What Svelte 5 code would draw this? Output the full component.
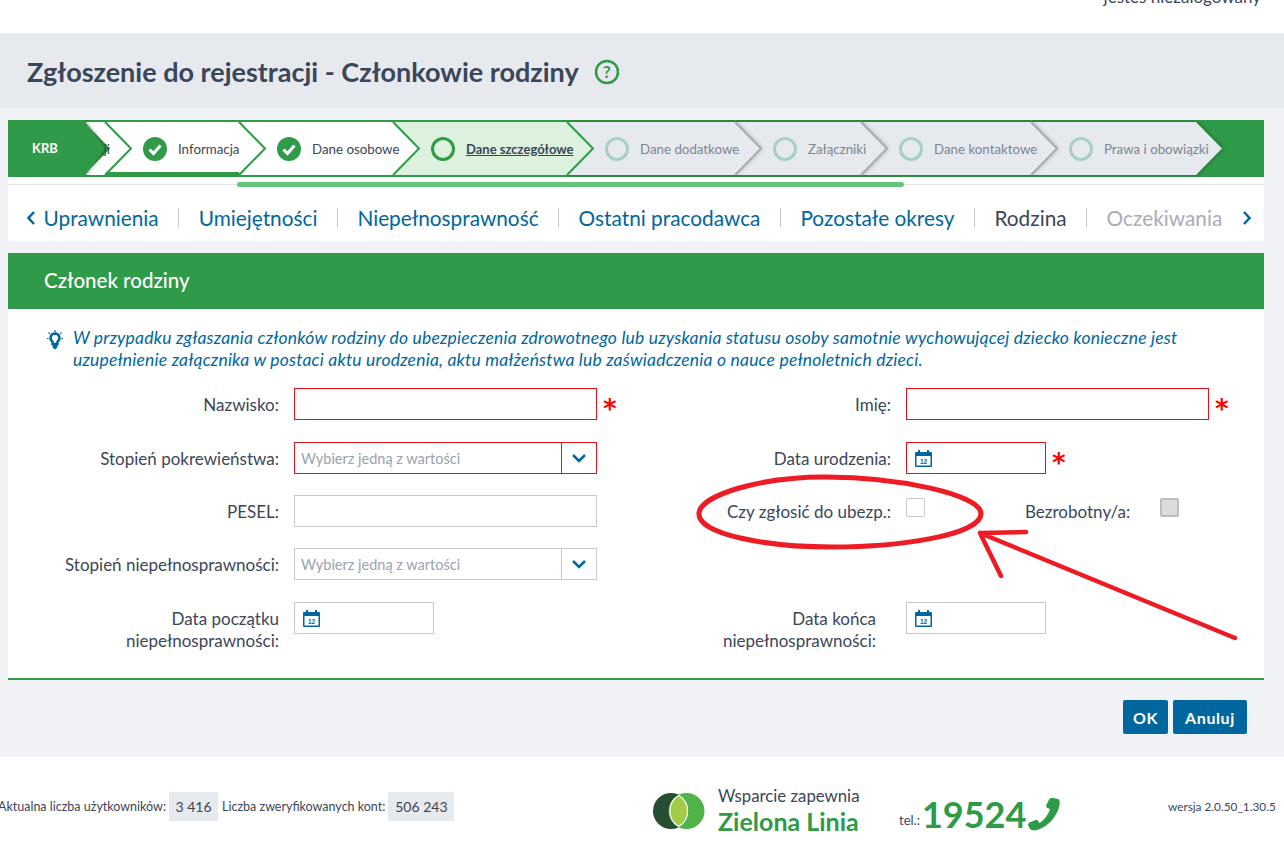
<script>
  const green = '#2f9a47';
  const steps = [
    { label: 'Informacja', state: 'done', width: 134 },
    { label: 'Dane osobowe', state: 'done', width: 154 },
    { label: 'Dane szczegółowe', state: 'current', width: 174 },
    { label: 'Dane dodatkowe', state: 'todo', width: 168 },
    { label: 'Załączniki', state: 'todo', width: 126 },
    { label: 'Dane kontaktowe', state: 'todo', width: 170 },
    { label: 'Prawa i obowiązki', state: 'todo', width: 165 }
  ];
  const slope = 26;
  const stepsLeft = 97;

  // chevrons are painted last to first, so each tip lies over the next notch
  let x = stepsLeft;
  const shapes = steps.map((s) => {
    const shape = { ...s, x, end: x + s.width };
    x += s.width;
    return shape;
  }).reverse();

  const chevron = (a, b) =>
    `${a},2 ${b},2 ${b + slope},28.5 ${b},55 ${a},55 ${a + slope},28.5`;
  const tip = (b) => `${b},2 ${b + slope},28.5 ${b},55`;

  const tabs = ['Uprawnienia', 'Umiejętności', 'Niepełnosprawność', 'Ostatni pracodawca', 'Pozostałe okresy'];
</script>

{#snippet calendar()}
  <svg class="cal" width="17" height="17" viewBox="0 0 17 17">
    <path fill="#00679e" d="M3 0h2v2h7V0h2v2h2a1 1 0 0 1 1 1v13a1 1 0 0 1-1 1H1a1 1 0 0 1-1-1V3a1 1 0 0 1 1-1h2z"/>
    <rect x="1.500" y="6" width="14" height="9.500" fill="#fff"/>
    <text x="8.500" y="13.500" text-anchor="middle" class="cal-num">12</text>
  </svg>
{/snippet}

{#snippet chevronDown()}
  <svg width="16" height="10" viewBox="0 0 16 10"><path d="M2 2l6 6 6-6" fill="none" stroke="#00679e" stroke-width="2.500"/></svg>
{/snippet}

<div class="page">
  <div class="topbar"><span>jesteś niezalogowany</span></div>

  <header class="head">
    <h1>Zgłoszenie do rejestracji - Członkowie rodziny</h1>
    <svg width="26" height="26" viewBox="0 0 26 26">
      <circle cx="13" cy="13" r="11" fill="none" stroke={green} stroke-width="2.500"/>
      <text x="13" y="19" text-anchor="middle" class="help">?</text>
    </svg>
  </header>

  <main class="main">
    <div class="wizard">
      <div class="stepper">
        <svg class="stepper-bg" width="1256" height="57" viewBox="0 0 1256 57">
          <rect width="1256" height="57" fill={green}/>
          {#each shapes as s, i}
            <polygon
              class:lifted={s.state === 'todo'}
              points={chevron(s.x, s.end)}
              fill={s.state === 'done' ? '#fff' : s.state === 'current' ? '#dcf2df' : '#e6e9ee'}
            />
            {#if i > 0}
              <polyline points={tip(s.end)} fill="none" stroke={s.state === 'todo' ? '#a9adb3' : green} stroke-width="2"/>
            {/if}
          {/each}
          <rect x="97" y="52" width="134" height="3" fill={green}/>
          <polygon points={chevron(76, 97)} fill="#fff"/>
          <polyline points={tip(97)} fill="none" stroke={green} stroke-width="2"/>
          <text x="102" y="33.500" text-anchor="end" class="cut">cji</text>
          <polygon class="lifted" points="0,0 76,0 97,28.500 76,57 0,57" fill={green}/>
        </svg>
        <div class="krb">KRB</div>
        {#each steps as s}
          <div class="step {s.state}" style="width: {s.width}px">
            {#if s.state === 'done'}
              <svg width="24" height="24" viewBox="0 0 24 24">
                <circle cx="12" cy="12" r="12" fill={green}/>
                <path d="M6.500 12.500l4 4 7-8" fill="none" stroke="#fff" stroke-width="3"/>
              </svg>
            {:else}
              <svg width="24" height="24" viewBox="0 0 24 24">
                <circle cx="12" cy="12" r="10.500" fill="none" stroke={s.state === 'current' ? green : '#a8cfc4'} stroke-width="3"/>
              </svg>
            {/if}
            <span>{s.label}</span>
          </div>
        {/each}
      </div>
      <div class="progress"><div class="bar"></div></div>
      <nav class="tabs">
        <svg class="arrow" width="10" height="16" viewBox="0 0 10 16"><path d="M8 2L2.500 8 8 14" fill="none" stroke="#00679e" stroke-width="2.500"/></svg>
        {#each tabs as t}
          <a href="#top">{t}</a>
          <i></i>
        {/each}
        <span class="now">Rodzina</span>
        <i></i>
        <span class="off">Oczekiwania</span>
        <svg class="arrow" width="10" height="16" viewBox="0 0 10 16"><path d="M2 2l5.500 6L2 14" fill="none" stroke="#00679e" stroke-width="2.500"/></svg>
      </nav>
    </div>

    <section class="card">
      <h2>Członek rodziny</h2>
      <div class="card-body">
        <div class="notice">
          <svg width="16" height="20" viewBox="0 0 16 20">
            <path d="M8 3.500a4.500 4.500 0 0 0-2.500 8.200V14h5v-2.300A4.500 4.500 0 0 0 8 3.500z" fill="none" stroke="#00679e" stroke-width="2.500"/>
            <path d="M5.500 15h5v2l-1.500 2H7l-1.500-2z" fill="#00679e"/>
            <path d="M8 0v2M1.500 2.500l1.300 1.300M14.500 2.500l-1.300 1.300M0 8.500h1.500M14.500 8.500H16" stroke="#00679e" stroke-width="1.200"/>
          </svg>
          <p>W przypadku zgłaszania członków rodziny do ubezpieczenia zdrowotnego lub uzyskania statusu osoby samotnie wychowującej dziecko konieczne jest uzupełnienie załącznika w postaci aktu urodzenia, aktu małżeństwa lub zaświadczenia o nauce pełnoletnich dzieci.</p>
        </div>

        <div class="form">
          <label>Nazwisko:</label>
          <div class="field"><div class="input wide bad"></div><b class="star">*</b></div>
          <label>Imię:</label>
          <div class="field"><div class="input wide bad"></div><b class="star">*</b></div>

          <label>Stopień pokrewieństwa:</label>
          <div class="field">
            <div class="select bad"><span>Wybierz jedną z wartości</span><div class="drop">{@render chevronDown()}</div></div>
          </div>
          <label>Data urodzenia:</label>
          <div class="field"><div class="input date bad">{@render calendar()}</div><b class="star">*</b></div>

          <label>PESEL:</label>
          <div class="field"><div class="input wide"></div></div>
          <label>Czy zgłosić do ubezp.:</label>
          <div class="field checks">
            <div class="check"></div>
            <label class="inner">Bezrobotny/a:</label>
            <div class="check dis"></div>
          </div>

          <label>Stopień niepełnosprawności:</label>
          <div class="field">
            <div class="select"><span>Wybierz jedną z wartości</span><div class="drop">{@render chevronDown()}</div></div>
          </div>
          <div></div>
          <div></div>

          <label>Data początku<br>niepełnosprawności:</label>
          <div class="field"><div class="input date">{@render calendar()}</div></div>
          <label class="narrow">Data końca<br>niepełnosprawności:</label>
          <div class="field"><div class="input date">{@render calendar()}</div></div>
        </div>
      </div>
      <div class="actions">
        <button class="ok">OK</button>
        <button class="cancel">Anuluj</button>
      </div>
    </section>
  </main>

  <footer class="foot">
    <div class="stats">
      <span>Aktualna liczba użytkowników:</span><em class="n1">3 416</em>
      <span>Liczba zweryfikowanych kont:</span><em class="n2">506 243</em>
    </div>
    <div class="support">
      <svg width="52" height="36" viewBox="0 0 52 36">
        <circle cx="18" cy="18" r="18" fill="#274d33"/>
        <circle cx="33.500" cy="18" r="18" fill="#4fb34a"/>
        <path d="M25.750 2.500a18 18 0 0 1 0 31 18 18 0 0 1 0-31z" fill="#a2cc45" stroke="#fff" stroke-width="1.200"/>
      </svg>
      <div class="who">
        <span>Wsparcie zapewnia</span>
        <strong>Zielona Linia</strong>
      </div>
    </div>
    <div class="phone">
      <small>tel.:</small>
      <strong>19524</strong>
      <svg width="32" height="34" viewBox="0 0 32 34">
        <path fill={green} d="M25 1l5 1c2 1 2 3 1.500 6C30 17 22 29 9 33c-3 .8-5 .5-7-1l-2-4c0-1 .5-2 1.500-2.500l6-2.500c1-.4 2 0 2.500 1l1.500 2c5-3 9-9 10.500-14l-2.500-1c-1-.5-1.500-1.500-1.300-2.500L21 2.500C21.500 1.300 23.500.700 25 1z"/>
      </svg>
    </div>
    <div class="ver">wersja 2.0.50_1.30.5</div>
  </footer>

  <!-- hand drawn annotation on top of the screenshot -->
  <svg class="scribble" width="1284" height="851" viewBox="0 0 1284 851">
    <g fill="none" stroke="#ed1c24" stroke-width="5" stroke-linecap="round" stroke-linejoin="round">
      <path d="M699 513C701 495 760 477 825 477C900 477 982 495 981 514C980 535 900 547 832 547C770 547 697 535 699 513z"/>
      <path stroke-width="4.500" d="M1235 638L980 533M980 533l46-1M980 533l21 43"/>
    </g>
  </svg>
</div>

<style>
  :global(body) {
    margin: 0;
    background: #fff;
  }

  .page {
    position: relative;
    width: 1284px;
    height: 851px;
    overflow: hidden;
    font-family: Lato, "Noto Sans", sans-serif;
    color: #3c4659;
  }

  .topbar {
    height: 33px;
    overflow: hidden;
    text-align: right;
    padding-right: 23px;
    font-size: 17px;
    line-height: 18px;
  }

  .topbar span {
    display: block;
    margin-top: -12px;
  }

  .head {
    height: 75px;
    box-sizing: border-box;
    background: #e6e9ee;
    display: flex;
    align-items: center;
    gap: 15px;
    padding: 2px 0 0 27px;
  }

  h1 {
    margin: 0;
    font-size: 27px;
    font-weight: 700;
  }

  .help {
    font: 700 17px Lato, sans-serif;
    fill: #2f9a47;
  }

  .main {
    height: 649px;
    box-sizing: border-box;
    background: #f0f2f6;
    padding: 12px 20px 0 8px;
  }

  .wizard {
    background: #fff;
  }

  .stepper {
    position: relative;
    height: 57px;
    display: flex;
  }

  .stepper-bg {
    position: absolute;
    left: 0;
    top: 0;
  }

  .lifted {
    filter: drop-shadow(1px 0 2px rgba(0, 0, 0, 0.3));
  }

  .cut {
    font: 13px Lato, sans-serif;
    fill: #3c4659;
  }

  .krb {
    position: relative;
    flex: none;
    width: 73px;
    padding-left: 24px;
    line-height: 57px;
    color: #fff;
    font-size: 13px;
    font-weight: 700;
  }

  .step {
    position: relative;
    flex: none;
    box-sizing: border-box;
    padding-left: 38px;
    display: flex;
    align-items: center;
    gap: 11px;
    font-size: 13.300px;
    white-space: nowrap;
  }

  .step svg {
    flex: none;
  }

  .step.current span {
    font-weight: 700;
    text-decoration: underline;
    font-size: 13px;
  }

  .step.todo {
    color: #7d8593;
  }

  .progress {
    height: 9px;
    position: relative;
  }

  .progress::before {
    content: "";
    position: absolute;
    left: 0;
    right: 0;
    top: 7px;
    height: 1px;
    background: #e3e5e8;
  }

  .bar {
    position: absolute;
    left: 229px;
    width: 667px;
    top: 5px;
    height: 5px;
    border-radius: 3px;
    background: #66c47a;
  }

  .tabs {
    height: 55px;
    box-sizing: border-box;
    display: flex;
    align-items: center;
    gap: 19.500px;
    padding: 8px 0 0 18px;
    font-size: 20.800px;
    white-space: nowrap;
  }

  .tabs a {
    color: #00679e;
    text-decoration: none;
  }

  .tabs i {
    flex: none;
    width: 1px;
    height: 19px;
    background: #c4c7cb;
  }

  .tabs .arrow {
    flex: none;
  }

  .tabs .arrow:first-child {
    margin-right: -12px;
  }

  .off {
    color: #a9adb5;
  }

  .card {
    margin-top: 12px;
  }

  h2 {
    margin: 0;
    height: 56px;
    line-height: 55px;
    padding-left: 36px;
    background: #2f9a47;
    color: #fff;
    font-size: 20.500px;
    font-weight: 500;
  }

  .card-body {
    background: #fff;
    box-sizing: border-box;
    padding-top: 18px;
    border-bottom: 2px solid #2f9a47;
    height: 371px;
  }

  .notice {
    display: flex;
    gap: 10px;
    padding-left: 39px;
  }

  .notice svg {
    flex: none;
    margin-top: 3px;
  }

  .notice p {
    margin: 0;
    width: 1120px;
    font-size: 17.500px;
    letter-spacing: 0.2px;
    font-style: italic;
    line-height: 22px;
    color: #00679e;
  }

  .form {
    margin-top: 17px;
    display: grid;
    grid-template-columns: 271px 318px 294px 373px;
    grid-template-rows: 54px 53px 53px 54px 32px;
  }

  label {
    text-align: right;
    font-size: 17px;
    line-height: 22px;
    padding-top: 6px;
    white-space: nowrap;
  }

  label.narrow {
    padding-right: 15px;
  }

  .field {
    padding-left: 15px;
    display: flex;
    align-items: flex-start;
    gap: 6px;
  }

  .input {
    flex: none;
    box-sizing: border-box;
    height: 32px;
    border: 1px solid #c6c8cc;
    background: #fff;
  }

  .wide {
    width: 303px;
  }

  .date {
    width: 140px;
    padding: 7px 0 0 8px;
  }

  .cal {
    display: block;
  }

  .cal-num {
    font: 700 6.500px "Liberation Sans", sans-serif;
    fill: #00679e;
  }

  .input.bad {
    border-color: #e8111b;
  }

  .star {
    color: #f00;
    font: 700 26px/43px "DejaVu Sans", sans-serif;
  }

  .select {
    flex: none;
    box-sizing: border-box;
    width: 303px;
    height: 32px;
    border: 1px solid #c6c8cc;
    display: flex;
    align-items: center;
    justify-content: space-between;
    font-size: 14.500px;
    color: #9aa2ae;
    padding-left: 6px;
  }

  .select.bad {
    border-color: #e8111b;
  }

  .drop {
    width: 35px;
    height: 100%;
    box-sizing: border-box;
    border-left: 1px solid #c6c8cc;
    display: flex;
    align-items: center;
    justify-content: center;
  }

  .bad .drop {
    border-left-color: #e8111b;
  }

  .checks {
    padding-top: 3px;
    gap: 0;
  }

  .check {
    flex: none;
    box-sizing: border-box;
    width: 19px;
    height: 19px;
    border: 1px solid #c6c8cc;
    border-radius: 2px;
  }

  .check.dis {
    background: #dcdcdc;
    border: 2px solid #bdbdbd;
    margin-left: 30px;
  }

  label.inner {
    margin-left: 100px;
    padding-top: 3px;
  }

  .actions {
    display: flex;
    justify-content: flex-end;
    gap: 5px;
    padding: 20px 17px 0 0;
  }

  button {
    height: 34px;
    padding: 0;
    border: none;
    border-radius: 2px;
    background: #00679e;
    color: #fff;
    font: 700 16px Lato, sans-serif;
    letter-spacing: 0.6px;
  }

  .ok {
    width: 45px;
  }

  .cancel {
    width: 74px;
  }

  .foot {
    height: 94px;
    display: flex;
    align-items: center;
    position: relative;
  }

  .stats {
    width: 655px;
    margin: 4px 0 0 -2px;
    flex: none;
    display: flex;
    align-items: center;
    gap: 3px;
    font-size: 12.500px;
    white-space: nowrap;
  }

  .stats em {
    font-style: normal;
    height: 29px;
    line-height: 29px;
    background: #e6e9ee;
    text-align: center;
    font-size: 14px;
    margin-right: 1px;
  }

  .n1 {
    width: 49px;
  }

  .n2 {
    width: 66px;
  }

  .support {
    width: 246px;
    margin-top: 14px;
    flex: none;
    display: flex;
    align-items: center;
    gap: 13px;
  }

  .who {
    display: flex;
    flex-direction: column;
  }

  .who span {
    font-size: 16.800px;
    line-height: 20px;
  }

  .who strong {
    font-size: 25px;
    line-height: 30px;
    font-weight: 700;
    color: #2f9a47;
  }

  .phone {
    margin-top: 20px;
    display: flex;
    align-items: center;
    gap: 2px;
    flex: none;
    width: 269px;
  }

  .phone small {
    font-size: 13px;
    align-self: flex-end;
    padding-bottom: 8px;
  }

  .phone strong {
    font-size: 36px;
    font-weight: 700;
    color: #2f9a47;
  }

  .ver {
    margin-top: 4px;
    font-size: 11.800px;
    white-space: nowrap;
  }

  .scribble {
    position: absolute;
    left: 0;
    top: 0;
    pointer-events: none;
  }
</style>
